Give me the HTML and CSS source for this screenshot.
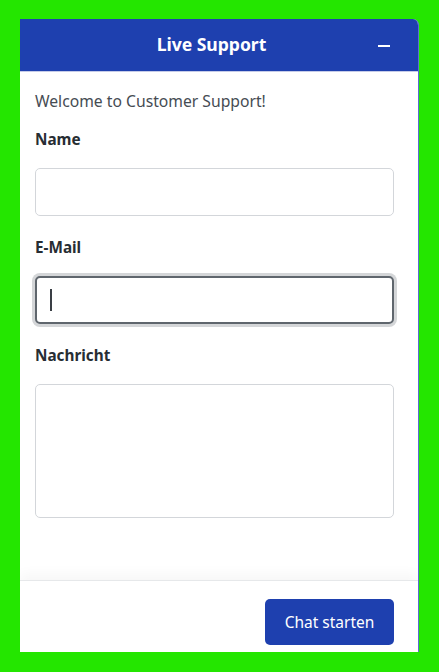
FILE: index.html
```html
<!DOCTYPE html>
<html lang="de">
<head>
<meta charset="utf-8">
<title>Live Support</title>
<link rel="stylesheet" href="styles.css">
</head>
<body>
<div class="widget">
  <header class="head">
    <span class="title">Live Support</span>
    <button class="min" aria-label="Minimieren"><span class="min-bar"></span></button>
  </header>
  <main class="content">
    <p class="welcome">Welcome to Customer Support!</p>
    <div class="field">
      <label class="label" for="name">Name</label>
      <input class="input" id="name" type="text">
    </div>
    <div class="field">
      <label class="label" for="mail">E-Mail</label>
      <div class="focus-wrap">
        <input class="input input-focus" id="mail" type="email">
        <span class="caret"></span>
      </div>
    </div>
    <div class="field">
      <label class="label" for="msg">Nachricht</label>
      <textarea class="input area" id="msg"></textarea>
    </div>
  </main>
  <footer class="foot">
    <button class="start">Chat starten</button>
  </footer>
</div>
</body>
</html>
```
FILE: styles.css
```css
* { box-sizing: border-box; }
html, body { margin: 0; padding: 0; }
body {
  background: #24e600;
  font-family: "Noto Sans", "Open Sans", sans-serif;
  width: 439px;
  height: 672px;
  padding: 19px 20px 20px 20px;
}
.widget {
  width: 399px;
  height: 633px;
  background: #fff;
  border-right: 1px solid #5d6bd4;
  border-top-right-radius: 6px;
  display: flex;
  flex-direction: column;
  overflow: hidden;
}
.head {
  height: 53px;
  background: #1e40af;
  border-bottom: 1px solid #c5cbe8;
  display: flex;
  align-items: center;
  padding: 0 24px 3px 15px;
}
.title {
  flex: 1;
  text-align: center;
  color: #fff;
  font-weight: 700;
  font-size: 17.6px;
  padding-left: 14px;
  letter-spacing: -0.05px;
}
.min {
  background: none;
  border: 0;
  padding: 0;
  width: 20px;
  height: 20px;
  display: flex;
  align-items: center;
  justify-content: center;
  cursor: pointer;
}
.min-bar {
  display: block;
  width: 12px;
  height: 2px;
  background: #fff;
  margin-top: 4px;
}
.content {
  flex: 1;
  padding: 17px 24px 0 15px;
}
.welcome {
  margin: 0 0 14px 0;
  font-size: 15.7px;
  line-height: 24px;
  color: #464c53;
}
.field { margin-bottom: 19px; }
.label {
  display: block;
  font-size: 15.3px;
  line-height: 24px;
  font-weight: 700;
  color: #272d33;
  margin-bottom: 17px;
}
.input {
  display: block;
  width: 359px;
  height: 48px;
  border: 1px solid #d3d6da;
  border-radius: 5px;
  background: #fff;
  font: inherit;
  outline: none;
  margin: 0;
}
.focus-wrap { position: relative; }
.input-focus {
  border: 2px solid #5f666d;
  box-shadow: 0 0 0 3px #d4d6d8;
}
.caret {
  position: absolute;
  left: 15px;
  top: 13px;
  width: 2px;
  height: 22px;
  background: #3a3f45;
}
.area {
  height: 134px;
  resize: none;
}
.foot {
  height: 72px;
  border-top: 1px solid #e6e8ea;
  box-shadow: 0 -6px 12px rgba(0, 0, 0, 0.035);
  display: flex;
  justify-content: flex-end;
  align-items: flex-start;
  padding: 18px 24px 0 15px;
}
.start {
  width: 129px;
  height: 46px;
  background: #1e40af;
  color: #fff;
  border: 0;
  border-radius: 5px;
  font-family: inherit;
  font-size: 15.5px;
  cursor: pointer;
}
```
